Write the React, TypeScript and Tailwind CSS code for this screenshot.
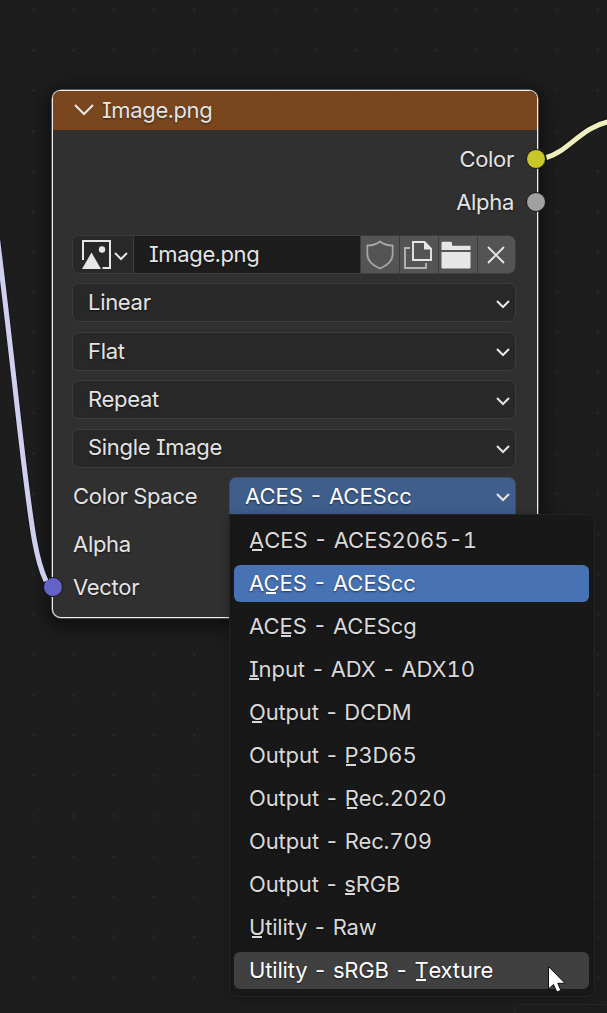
import React from "react";

const FIELD =
  "flex h-[39px] items-center justify-between rounded-[7px] border border-[#3d3d3d] bg-[#282828] pl-[15px] pr-[5px]";

function Chevron() {
  return (
    <svg width="14" height="10" viewBox="0 0 14 10" fill="none" className="mt-[2px]">
      <path d="M1 2 L7 8 L13 2" stroke="#e6e6e6" strokeWidth="2" />
    </svg>
  );
}

function Select({ label, className = "-mt-[2px]" }: { label: string; className?: string }) {
  return (
    <div className={FIELD}>
      <span className={className}>{label}</span>
      <Chevron />
    </div>
  );
}

function Socket({ className, side }: { className: string; side: "left" | "right" }) {
  return (
    <span
      className={`absolute top-1/2 size-[20px] -translate-y-1/2 rounded-full border-[1.5px] border-[#161616] ${
        side === "left" ? "-left-[10px]" : "-right-[9px]"
      } ${className}`}
    />
  );
}

type Item = {
  before: string;
  key?: string;
  after: string;
  state?: "active" | "hover";
  tracking: string;
};

const ITEMS: Item[] = [
  { before: "", key: "A", after: "CES - ACES2065-1", tracking: "tracking-[0px]" },
  { before: "A", key: "C", after: "ES - ACEScc", state: "active", tracking: "tracking-[0px]" },
  { before: "AC", key: "E", after: "S - ACEScg", tracking: "tracking-[0px]" },
  { before: "", key: "I", after: "nput - ADX - ADX10", tracking: "tracking-[-0.1px]" },
  { before: "", key: "O", after: "utput - DCDM", tracking: "tracking-[-0.16px]" },
  { before: "Output - ", key: "P", after: "3D65", tracking: "tracking-[-0.14px]" },
  { before: "Output - ", key: "R", after: "ec.2020", tracking: "tracking-[-0.12px]" },
  { before: "Output - Rec.709", after: "", tracking: "tracking-[-0.12px]" },
  { before: "Output - ", key: "s", after: "RGB", tracking: "tracking-[-0.16px]" },
  { before: "", key: "U", after: "tility - Raw", tracking: "tracking-[-0.2px]" },
  {
    before: "Utility - sRGB - ",
    key: "T",
    after: "exture",
    state: "hover",
    tracking: "tracking-[-0.17px]",
  },
];

function MenuItem({ item }: { item: Item }) {
  const tone =
    item.state === "active"
      ? "bg-[#4772b3] text-white"
      : item.state === "hover"
        ? "bg-[#404040] text-white"
        : "text-[#d9d9d9]";
  return (
    <div className={`flex h-[37px] items-center rounded-[6px] pl-[15px] ${tone} ${item.tracking}`}>
      <span className="-mt-px whitespace-pre">
        {item.before}
        {item.key && (
          <span className="relative">
            {item.key}
            <span className="absolute bottom-[2px] left-1/2 h-[1.6px] w-[10px] -translate-x-1/2 bg-current" />
          </span>
        )}
        {item.after}
      </span>
    </div>
  );
}

export default function App() {
  return (
    <div className="relative h-[1013px] w-[607px] overflow-hidden bg-[#1d1d1d] bg-[radial-gradient(circle_at_center,#272727_1px,transparent_1.6px)] bg-[size:40.3px_40.3px] bg-[position:13.2px_30.2px] pl-[52px] pt-[90px] font-['Inter',sans-serif] text-[22px] leading-[26px] tracking-[-0.3px] text-[#e4e4e4] [font-feature-settings:'tnum','cv08'] [text-shadow:0_1px_2px_rgba(0,0,0,0.55)]">
      <div className="absolute -bottom-[10px] -right-[10px] h-[19px] w-[103px] rounded-[7px] border border-[#262626]" />

      <div className="relative h-[528px] w-[486px] rounded-[9px] border-[1.5px] border-[#ededed] bg-[#303030] shadow-[0_4px_18px_5px_rgba(0,0,0,0.5),0_0_0_0.5px_#dddddd]">
        <div className="flex h-[39px] items-center gap-[8px] rounded-t-[7px] bg-[#79461d] pl-[21px]">
          <svg width="20" height="12" viewBox="0 0 20 12" fill="none" className="-mt-[2px]">
            <path d="M1 1 L10 10 L19 1" stroke="#e8e8e8" strokeWidth="2" />
          </svg>
          <span className="-mt-[2px] tracking-[-0.36px]">Image.png</span>
        </div>

        <div className="relative mt-[7px] flex h-[43px] items-center justify-end pr-[23px]">
          <span>Color</span>
          <Socket side="right" className="bg-[#c7c729]" />
        </div>
        <div className="relative flex h-[43px] items-center justify-end pr-[23px]">
          <span>Alpha</span>
          <Socket side="right" className="bg-[#a1a1a1]" />
        </div>

        <div className="mt-[12px] flex flex-col gap-[9.4px] pl-[19px] pr-[21px]">
          <div className="flex h-[39px] overflow-hidden rounded-[7px] border border-[#3d3d3d] bg-[#282828]">
            <div className="flex w-[61px] shrink-0 items-center gap-[3px] border-r border-[#3d3d3d] pl-[9px]">
              <svg width="29" height="29" viewBox="0 0 29 29">
                <path d="M1 20V1H28V28H20.5" fill="none" stroke="#e6e6e6" strokeWidth="2" />
                <path d="M0 29 L9.5 12.5 L19 29Z" fill="#e6e6e6" />
                <circle cx="20" cy="9.5" r="3.2" fill="#e6e6e6" />
              </svg>
              <Chevron />
            </div>
            <div className="flex grow items-center bg-[#1d1d1d] pl-[15px]">
              <span className="-mt-px tracking-[-0.36px]">Image.png</span>
            </div>
            <div className="flex shrink-0 gap-px bg-[#3d3d3d] pl-px">
              <div className="flex w-[38px] items-center justify-center bg-[#545454]">
                <svg width="28" height="30" viewBox="0 0 28 30" fill="none" className="-ml-px">
                  <path
                    d="M14 1.5 C11 4 6 5.5 1.3 5.5 V14 C1.3 21 7 25.5 14 28.5 C21 25.5 26.7 21 26.7 14 V5.5 C22 5.5 17 4 14 1.5Z"
                    stroke="#a6a6a6"
                    strokeWidth="1.8"
                    strokeLinejoin="round"
                  />
                </svg>
              </div>
              <div className="flex w-[37.5px] items-center justify-center bg-[#545454]">
                <svg width="30" height="30" viewBox="0 0 30 30" fill="none" className="-ml-[2px]">
                  <path d="M7 8H2V28H23V23" stroke="#b4b4b4" strokeWidth="1.9" />
                  <path d="M28 9V20H10V2H21" stroke="#e6e6e6" strokeWidth="1.9" />
                  <path d="M21 1H22L29 8.5V9.5H21Z" fill="#e6e6e6" />
                </svg>
              </div>
              <div className="flex w-[38px] items-center justify-center bg-[#545454]">
                <svg width="30" height="28" viewBox="0 0 30 28" fill="#e6e6e6" className="-ml-[3px]">
                  <path d="M0.5 9V1.7Q0.5 0.7 1.5 0.7H10L11 1.7V4.7H29.5V9Z" />
                  <path d="M0.5 11H29.5V26.5Q29.5 27.5 28.5 27.5H1.5Q0.5 27.5 0.5 26.5Z" />
                </svg>
              </div>
              <div className="flex w-[37.5px] items-center justify-center bg-[#545454]">
                <svg width="18" height="18" viewBox="0 0 18 18" fill="none" className="-ml-px">
                  <path d="M1 1L17 17M17 1L1 17" stroke="#e6e6e6" strokeWidth="1.9" />
                </svg>
              </div>
            </div>
          </div>

          <Select label="Linear" />
          <Select label="Flat" className="mt-0" />
          <Select label="Repeat" />
          <Select label="Single Image" />

          <div className="flex h-[39px] items-center">
            <span className="w-[157px] shrink-0 pl-px">Color Space</span>
            <div className="flex h-[39px] grow items-center justify-between rounded-t-[7px] border border-[#3d4a60] bg-[#405e8c] pl-[15px] pr-[5px] text-white">
              <span className="-mt-px tracking-normal">ACES - ACEScc</span>
              <Chevron />
            </div>
          </div>
          <div className="-mt-px flex h-[39px] items-center pl-px">Alpha</div>
        </div>
        <div className="relative mt-[2px] flex h-[43px] items-center pl-[20px]">
          <span>Vector</span>
          <Socket side="left" className="bg-[#6363c7]" />
        </div>
      </div>

      <svg className="absolute inset-0" width="607" height="1013" fill="none">
        <path d="M-3 235C9 330 16 400 24 465S36 560 46 581" stroke="#161616" strokeWidth="7" />
        <path d="M-3 235C9 330 16 400 24 465S36 560 46 581" stroke="#cfcff0" strokeWidth="5" />
        <path d="M546.5 157.5C568 152 582 126 610 121.5" stroke="#161616" strokeWidth="7" />
        <path d="M546.5 157.5C568 152 582 126 610 121.5" stroke="#efefc0" strokeWidth="5" />
      </svg>

      <div className="absolute left-[229px] top-[514px] flex h-[483px] w-[366px] flex-col gap-[6px] rounded-b-[8px] rounded-tr-[8px] border border-[#242424] bg-[#181818] pl-[4px] pr-[5px] pt-[7px] shadow-[0_2px_10px_rgba(0,0,0,0.25)]">
        {ITEMS.map((item, i) => (
          <MenuItem key={i} item={item} />
        ))}
      </div>

      <svg className="absolute left-[546px] top-[964px]" width="24" height="32" viewBox="0 0 24 32">
        <path
          d="M2.5 2.5V25L7.5 20.5L10.8 28L14.8 26.3L11.8 19.3H19Z"
          fill="#fff"
          stroke="#111"
          strokeWidth="1"
        />
      </svg>
    </div>
  );
}
